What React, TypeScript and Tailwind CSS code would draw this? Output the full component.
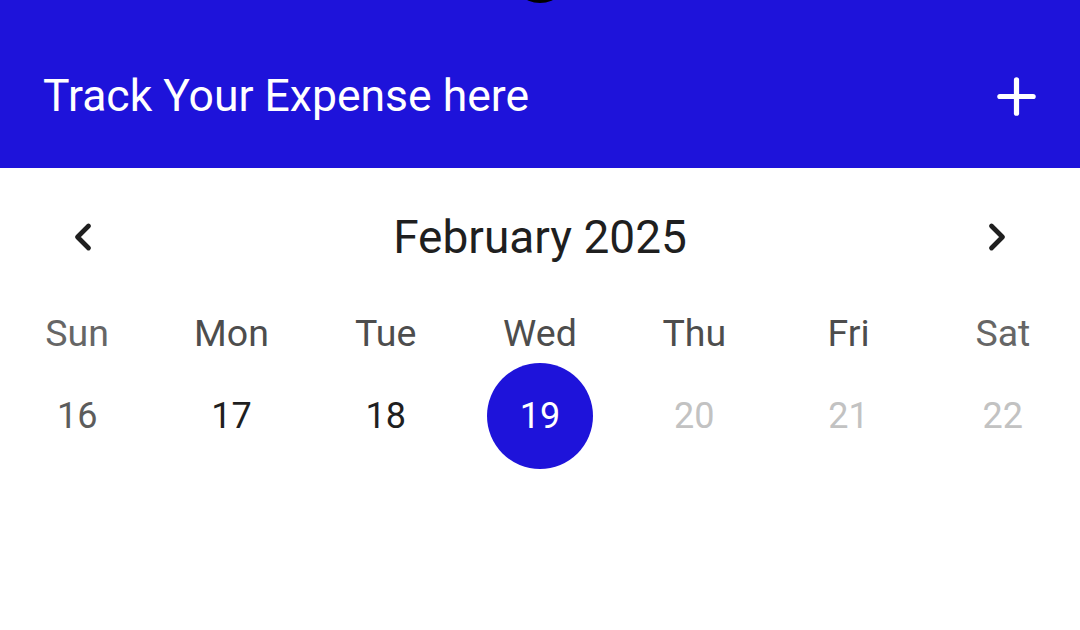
import { Plus, ChevronLeft, ChevronRight } from "lucide-react";

const days = [
  { name: "Sun", date: 16, nameColor: "text-[#666666]", dateColor: "text-[#5c5c5c]" },
  { name: "Mon", date: 17, nameColor: "text-[#4d4d4d]", dateColor: "text-[#1f1f1f]" },
  { name: "Tue", date: 18, nameColor: "text-[#4d4d4d]", dateColor: "text-[#1f1f1f]" },
  { name: "Wed", date: 19, nameColor: "text-[#4d4d4d]", dateColor: "text-white", selected: true },
  { name: "Thu", date: 20, nameColor: "text-[#4d4d4d]", dateColor: "text-[#c2c2c2]" },
  { name: "Fri", date: 21, nameColor: "text-[#4d4d4d]", dateColor: "text-[#c2c2c2]" },
  { name: "Sat", date: 22, nameColor: "text-[#666666]", dateColor: "text-[#c2c2c2]" },
];

export default function App() {
  return (
    <div className="w-[1080px] h-[630px] bg-white overflow-hidden font-['Roboto',sans-serif]">
      {/* Header */}
      <div className="relative h-[168px] bg-[#1e13da] flex items-center justify-between pl-[43px] pr-[35px] pt-[24px]">
        <div className="absolute left-1/2 -translate-x-1/2 top-[-57px] w-[60px] h-[60px] rounded-full bg-black" />
        <h1 className="text-white text-[44.5px] leading-none">Track Your Expense here</h1>
        <Plus size={57} strokeWidth={2.2} className="text-white" />
      </div>

      {/* Month switcher */}
      <div className="flex items-center justify-between px-[61px] mt-[47px] h-[44px]">
        <ChevronLeft size={44} strokeWidth={2.6} className="text-[#1f1f1f]" />
        <span className="text-[46px] leading-none text-[#1f1f1f]">February 2025</span>
        <ChevronRight size={44} strokeWidth={2.6} className="text-[#1f1f1f]" />
      </div>

      {/* Week */}
      <div className="grid grid-cols-7 mt-[56px]">
        {days.map((d) => (
          <div key={d.name} className="flex flex-col items-center">
            <span className={`text-[37.5px] leading-none ${d.nameColor}`}>{d.name}</span>
            <div
              className={`mt-[10px] w-[106px] h-[106px] rounded-full flex items-center justify-center ${
                d.selected ? "bg-[#1e13da]" : ""
              }`}
            >
              <span className={`text-[36px] leading-none ${d.dateColor}`}>{d.date}</span>
            </div>
          </div>
        ))}
      </div>
    </div>
  );
}
